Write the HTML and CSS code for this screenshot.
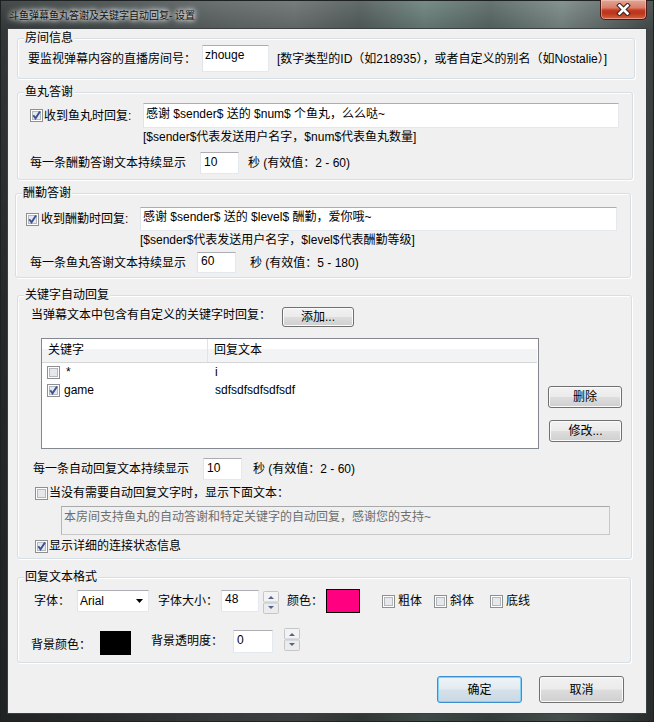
FILE: index.html
```html
<!DOCTYPE html>
<html lang="zh-CN">
<head>
<meta charset="utf-8">
<title>斗鱼弹幕鱼丸答谢及关键字自动回复- 设置</title>
<link rel="stylesheet" href="styles.css">
</head>
<body>
<div class="window">
  <div class="titlebar">
    <div class="title">斗鱼弹幕鱼丸答谢及关键字自动回复- 设置</div>
    <div class="close">
      <svg width="15" height="13" viewBox="0 0 15 13"><path d="M3.5 2.5 L11.5 10.5 M11.5 2.5 L3.5 10.5" stroke="#3a2522" stroke-width="4.6" stroke-linecap="square" fill="none"/><path d="M3.5 2.5 L11.5 10.5 M11.5 2.5 L3.5 10.5" stroke="#ffffff" stroke-width="2.6" stroke-linecap="square" fill="none"/></svg>
    </div>
  </div>

  <div class="client">
    <div class="group g1">
      <div class="gtitle">房间信息</div>
      <div class="row room-row">
        <span class="room-lbl">要监视弹幕内容的直播房间号：</span>
        <div class="edit room-edit">zhouge</div>
        <span class="room-hint">[数字类型的ID（如218935），或者自定义的别名（如Nostalie）]</span>
      </div>
    </div>

    <div class="group g2">
      <div class="gtitle">鱼丸答谢</div>
      <div class="row g2-r1">
        <svg class="cb" width="13" height="13" viewBox="0 0 13 13"><rect x=".5" y=".5" width="12" height="12" fill="#fff" stroke="#8e8f8f"/><rect x="2.5" y="2.5" width="8" height="8" fill="#e6e8eb" stroke="#b3b8be"/><path d="M3.3 6.3 L5.5 9.3 L10 2.4" fill="none" stroke="#3b5196" stroke-width="1.9"/></svg>
        <span class="cb-lbl g2-lbl">收到鱼丸时回复:</span>
        <div class="edit g2-msg">感谢 $sender$ 送的 $num$ 个鱼丸，么么哒~</div>
      </div>
      <div class="hint g2-hint">[$sender$代表发送用户名字，$num$代表鱼丸数量]</div>
      <div class="row g2-r3">
        <span class="g2-dur">每一条酬勤答谢文本持续显示</span>
        <div class="edit num g2-num">10</div>
        <span class="g2-range">秒 (有效值：2 - 60)</span>
      </div>
    </div>

    <div class="group g3">
      <div class="gtitle">酬勤答谢</div>
      <div class="row g3-r1">
        <svg class="cb" width="13" height="13" viewBox="0 0 13 13"><rect x=".5" y=".5" width="12" height="12" fill="#fff" stroke="#8e8f8f"/><rect x="2.5" y="2.5" width="8" height="8" fill="#e6e8eb" stroke="#b3b8be"/><path d="M3.3 6.3 L5.5 9.3 L10 2.4" fill="none" stroke="#3b5196" stroke-width="1.9"/></svg>
        <span class="cb-lbl g3-lbl">收到酬勤时回复:</span>
        <div class="edit g3-msg">感谢 $sender$ 送的 $level$ 酬勤，爱你哦~</div>
      </div>
      <div class="hint g3-hint">[$sender$代表发送用户名字，$level$代表酬勤等级]</div>
      <div class="row g3-r3">
        <span class="g3-dur">每一条鱼丸答谢文本持续显示</span>
        <div class="edit num g3-num">60</div>
        <span class="g3-range">秒 (有效值：5 - 180)</span>
      </div>
    </div>

    <div class="group g4">
      <div class="gtitle">关键字自动回复</div>
      <div class="row g4-r1">
        <span class="g4-lbl">当弹幕文本中包含有自定义的关键字时回复：</span>
        <button class="btn add-btn">添加...</button>
      </div>
      <div class="row list-row">
        <div class="listbox">
          <div class="lhead">
            <div class="lcol1">关键字</div>
            <div class="lcol2">回复文本</div>
          </div>
          <div class="lrow">
            <div class="lcol1">
              <svg class="cb" width="13" height="13" viewBox="0 0 13 13"><rect x=".5" y=".5" width="12" height="12" fill="#fff" stroke="#8e8f8f"/><rect x="2.5" y="2.5" width="8" height="8" fill="#e6e8eb" stroke="#b3b8be"/></svg>
              <span class="kw">*</span>
            </div>
            <div class="lcol2">i</div>
          </div>
          <div class="lrow">
            <div class="lcol1">
              <svg class="cb" width="13" height="13" viewBox="0 0 13 13"><rect x=".5" y=".5" width="12" height="12" fill="#fff" stroke="#8e8f8f"/><rect x="2.5" y="2.5" width="8" height="8" fill="#e6e8eb" stroke="#b3b8be"/><path d="M3.3 6.3 L5.5 9.3 L10 2.4" fill="none" stroke="#3b5196" stroke-width="1.9"/></svg>
              <span class="kw kw2">game</span>
            </div>
            <div class="lcol2">sdfsdfsdfsdfsdf</div>
          </div>
        </div>
        <div class="side-btns">
          <button class="btn del-btn">删除</button>
          <button class="btn mod-btn">修改...</button>
        </div>
      </div>
      <div class="row g4-r3">
        <span class="g4-dur">每一条自动回复文本持续显示</span>
        <div class="edit num g4-num">10</div>
        <span class="g4-range">秒 (有效值：2 - 60)</span>
      </div>
      <div class="row chkline g4-c1">
        <svg class="cb" width="13" height="13" viewBox="0 0 13 13"><rect x=".5" y=".5" width="12" height="12" fill="#fff" stroke="#8e8f8f"/><rect x="2.5" y="2.5" width="8" height="8" fill="#e6e8eb" stroke="#b3b8be"/></svg>
        <span class="chk-text">当没有需要自动回复文字时，显示下面文本：</span>
      </div>
      <div class="edit disabled-edit">本房间支持鱼丸的自动答谢和特定关键字的自动回复，感谢您的支持~</div>
      <div class="row chkline g4-c2">
        <svg class="cb" width="13" height="13" viewBox="0 0 13 13"><rect x=".5" y=".5" width="12" height="12" fill="#fff" stroke="#8e8f8f"/><rect x="2.5" y="2.5" width="8" height="8" fill="#e6e8eb" stroke="#b3b8be"/><path d="M3.3 6.3 L5.5 9.3 L10 2.4" fill="none" stroke="#3b5196" stroke-width="1.9"/></svg>
        <span class="chk-text">显示详细的连接状态信息</span>
      </div>
    </div>

    <div class="group g5">
      <div class="gtitle">回复文本格式</div>
      <div class="row g5-r1">
        <span class="f-lbl">字体：</span>
        <div class="combo">
          <span>Arial</span>
          <svg width="8" height="4" viewBox="0 0 8 4"><path d="M0 0 H7 L3.5 4 Z" fill="#000"/></svg>
        </div>
        <span class="fs-lbl">字体大小：</span>
        <div class="edit num fs-edit">48</div>
        <svg class="spin fs-spin" width="16" height="23" viewBox="0 0 16 23"><rect x=".5" y=".5" width="15" height="10.5" rx="1" fill="#f3f3f3" stroke="#c4c6c9"/><rect x=".5" y="12" width="15" height="10.5" rx="1" fill="#ececec" stroke="#c4c6c9"/><path d="M5 8 L11 8 L8 5 Z" fill="#4f6590"/><path d="M5 15 L11 15 L8 18 Z" fill="#4f6590"/></svg>
        <span class="c-lbl">颜色：</span>
        <div class="swatch pink"></div>
        <svg class="cb cb-b" width="13" height="13" viewBox="0 0 13 13"><rect x=".5" y=".5" width="12" height="12" fill="#fff" stroke="#8e8f8f"/><rect x="2.5" y="2.5" width="8" height="8" fill="#e6e8eb" stroke="#b3b8be"/></svg>
        <span class="st-lbl">粗体</span>
        <svg class="cb cb-i" width="13" height="13" viewBox="0 0 13 13"><rect x=".5" y=".5" width="12" height="12" fill="#fff" stroke="#8e8f8f"/><rect x="2.5" y="2.5" width="8" height="8" fill="#e6e8eb" stroke="#b3b8be"/></svg>
        <span class="st-lbl">斜体</span>
        <svg class="cb cb-u" width="13" height="13" viewBox="0 0 13 13"><rect x=".5" y=".5" width="12" height="12" fill="#fff" stroke="#8e8f8f"/><rect x="2.5" y="2.5" width="8" height="8" fill="#e6e8eb" stroke="#b3b8be"/></svg>
        <span class="st-lbl">底线</span>
      </div>
      <div class="row g5-r2">
        <span class="bg-lbl">背景颜色：</span>
        <div class="swatch black"></div>
        <span class="op-lbl">背景透明度：</span>
        <div class="edit num op-edit">0</div>
        <svg class="spin op-spin" width="16" height="23" viewBox="0 0 16 23"><rect x=".5" y=".5" width="15" height="10.5" rx="1" fill="#f3f3f3" stroke="#c4c6c9"/><rect x=".5" y="12" width="15" height="10.5" rx="1" fill="#ececec" stroke="#c4c6c9"/><path d="M5 8 L11 8 L8 5 Z" fill="#4f6590"/><path d="M5 15 L11 15 L8 18 Z" fill="#4f6590"/></svg>
      </div>
    </div>

    <div class="actions">
      <button class="btn big default">确定</button>
      <button class="btn big">取消</button>
    </div>
  </div>
</div>
</body>
</html>
```

FILE: styles.css
```css
* { box-sizing: border-box; }
html, body { margin: 0; padding: 0; }
body {
  font: 12px/14px "Liberation Sans", "Noto Sans CJK SC", sans-serif;
  color: #000;
  background: #2b2f30;
}
.window {
  width: 654px;
  height: 722px;
  display: flex;
  flex-direction: column;
  background:
    linear-gradient(180deg, rgba(255,255,255,0.06) 0, rgba(0,0,0,0.15) 30px, rgba(0,0,0,0.35) 300px, rgba(0,0,0,0.45) 100%),
    linear-gradient(90deg, #3a3f40 0%, #4c5353 18%, #646b6b 35%, #6e7474 45%, #57625f 55%, #6f8580 65%, #5c6c69 75%, #7e8d8a 86%, #66706f 93%, #484e4f 100%);
  border: 1px solid #1d2122;
}
.titlebar {
  height: 27px;
  display: flex;
  align-items: flex-start;
  flex: none;
}
.title {
  margin: 8px 0 0 8px;
  font-size: 10px;
  line-height: 14px;
  color: #111;
  text-shadow: 0 0 4px #fff, 0 0 6px rgba(255,255,255,0.9), 0 0 8px rgba(255,255,255,0.6);
}
.close {
  margin: -1px 6px 0 auto;
  width: 47px;
  height: 20px;
  border: 1px solid #4b1c14;
  border-top: none;
  border-radius: 0 0 5px 5px;
  background: linear-gradient(180deg, #e2a595 0%, #d7806b 40%, #c4391f 55%, #b9361c 70%, #d46243 100%);
  box-shadow: inset 0 0 0 1px rgba(255,220,210,0.45);
  display: flex;
  align-items: center;
  justify-content: center;
}
.client {
  margin-left: 6px;
  width: 640px;
  height: 686px;
  background: #f0f0f0;
  border: 1px solid #3a4042;
  padding-top: 9px;
  flex: none;
}

/* group boxes */
.group {
  border: 1px solid #d5dfe5;
  border-radius: 3px;
  box-shadow: inset 1px 1px 0 #fff, 1px 1px 0 #fff;
}
.gtitle {
  display: table;
  margin: -8px 0 0 6px;
  padding: 0 1px;
  background: #f0f0f0;
  line-height: 14px;
  height: 14px;
}
.row { display: flex; align-items: center; }
.hint { line-height: 14px; }

/* edits */
.edit {
  background: #fff;
  border: 1px solid;
  border-color: #abadb3 #e3e9ef #e3e9ef #e2e3ea;
  padding: 2px 2px 0;
  line-height: 14px;
  white-space: nowrap;
  overflow: hidden;
  flex: none;
}
.num { padding-left: 3px; }

/* checkboxes */
.cb { display: block; flex: none; }

/* buttons */
.btn {
  font: inherit;
  color: #000;
  padding: 0;
  border: 1px solid #707070;
  border-radius: 3px;
  background: linear-gradient(180deg, #f2f2f2 0%, #ebebeb 48%, #dddddd 52%, #cfcfcf 100%);
  box-shadow: inset 0 0 0 1px #fbfbfb;
  line-height: 14px;
  flex: none;
}
.btn.default {
  border-color: #3c8fd0;
  background: linear-gradient(180deg, #eef4f8 0%, #e3ebf1 48%, #d5e1ea 52%, #c9d8e4 100%);
  box-shadow: inset 0 0 0 1px #7fd3f7;
}

/* group 1 */
.g1 { margin-left: 9px; width: 618px; height: 41px; }
.room-row { margin-left: 10px; }
.room-lbl { width: 174px; flex: none; }
.room-edit { width: 67px; height: 27px; }
.room-hint { margin-left: 8px; white-space: nowrap; }

/* group 2 */
.g2 { margin: 13px 0 0 9px; width: 616px; height: 88px; }
.g2-r1 { margin: 4px 0 0 12px; height: 25px; }
.cb-lbl { flex: none; }
.g2-lbl { margin-left: 1px; width: 99px; }
.g2-msg { width: 476px; height: 25px; padding-top: 3px; }
.g2-hint { margin: 2px 0 0 125px; }
.g2-r3 { margin: 8px 0 0 12px; }
.g2-dur { width: 170px; flex: none; }
.g2-num { width: 39px; height: 22px; padding-top: 2px; }
.g2-range { margin-left: 9px; }

/* group 3 */
.g3 { margin: 13px 0 0 7px; width: 616px; height: 85px; }
.g3-r1 { margin: 7px 0 0 10px; height: 24px; }
.g3-lbl { margin-left: 2px; width: 99px; }
.g3-msg { width: 477px; height: 24px; padding-top: 2px; }
.g3-hint { margin: 2px 0 0 124px; }
.g3-r3 { margin: 5px 0 0 14px; }
.g3-dur { width: 167px; flex: none; }
.g3-num { width: 39px; height: 21px; padding-top: 1px; }
.g3-range { margin-left: 14px; }

/* group 4 */
.g4 { margin: 17px 0 0 9px; width: 615px; height: 264px; }
.g4-r1 { margin: 5px 0 0 13px; height: 20px; }
.g4-lbl { width: 251px; flex: none; padding-bottom: 5px; }
.add-btn { width: 72px; height: 20px; }
.list-row { margin: 11px 0 0 23px; align-items: flex-start; }
.listbox {
  width: 498px;
  height: 111px;
  border: 1px solid #828790;
  background: #fff;
  flex: none;
}
.lhead {
  display: flex;
  height: 24px;
  margin-right: 1px;
  border-bottom: 1px solid #d5d5d5;
  background: linear-gradient(180deg, #ffffff 0%, #ffffff 42%, #f2f3f5 46%, #f2f3f5 100%);
}
.lhead .lcol1 { width: 166px; border-right: 1px solid #e2e3e5; padding: 4px 0 0 6px; }
.lhead .lcol2 { padding: 4px 0 0 6px; }
.lrow { display: flex; height: 18px; align-items: center; }
.lrow .lcol1 { width: 166px; display: flex; align-items: center; padding-left: 5px; }
.lrow .lcol2 { padding-left: 7px; }
.kw { margin-left: 6px; }
.kw2 { margin-left: 4px; }
.side-btns { display: flex; flex-direction: column; margin-left: 9px; }
.del-btn { width: 74px; height: 22px; margin-top: 48px; }
.mod-btn { width: 73px; height: 22px; margin: 12px 0 0 1px; }
.g4-r3 { margin: 9px 0 0 15px; }
.g4-dur { width: 170px; flex: none; }
.g4-num { width: 39px; height: 22px; padding-top: 2px; }
.g4-range { margin-left: 11px; }
.chkline { margin-left: 17px; height: 14px; }
.chk-text { margin-left: 1px; }
.g4-c1 { margin-top: 6px; }
.disabled-edit {
  margin: 6px 0 0 43px;
  width: 549px;
  height: 29px;
  background: #f0f0f0;
  border: 1px solid #abadb3;
  border-color: #a9a9a9 #c8c8c8 #c8c8c8 #b5b5b5;
  color: #6d6d6d;
  padding: 3px 2px 0;
}
.g4-c2 { margin-top: 4px; }

/* group 5 */
.g5 { margin: 18px 0 0 9px; width: 614px; height: 86px; }
.g5-r1 { margin: 4px 0 0 16px; height: 26px; }
.f-lbl { width: 43px; flex: none; }
.combo {
  width: 72px;
  height: 22px;
  background: #fff;
  border: 1px solid;
  border-color: #abadb3 #e3e9ef #e3e9ef #e2e3ea;
  display: flex;
  align-items: center;
  justify-content: space-between;
  padding: 0 4px 0 2px;
  flex: none;
}
.combo svg { display: block; }
.fs-lbl { margin-left: 9px; width: 63px; flex: none; }
.fs-edit { width: 38px; height: 22px; padding-top: 1px; }
.spin { display: block; flex: none; }
.fs-spin { margin-left: 4px; margin-top: 3px; }
.c-lbl { margin-left: 8px; width: 39px; flex: none; }
.swatch { border: 1px solid #000; flex: none; }
.pink { width: 34px; height: 24px; background: #ff0080; }
.black { width: 31px; height: 24px; background: #000; margin-top: 3px; }
.cb-b { margin-left: 22px; }
.cb-i { margin-left: 12px; }
.cb-u { margin-left: 16px; }
.st-lbl { margin-left: 3px; flex: none; }
.g5-r2 { margin: 14px 0 0 13px; align-items: flex-start; }
.bg-lbl { width: 69px; flex: none; margin-top: 10px; }
.op-lbl { margin: 6px 0 0 20px; width: 82px; flex: none; }
.op-edit { width: 40px; height: 23px; margin-top: 2px; padding-top: 2px; }
.op-spin { margin-left: 11px; }

/* bottom buttons */
.actions {
  display: flex;
  gap: 17px;
  margin-top: 13px;
  padding-left: 429px;
}
.big { width: 85px; height: 27px; }
```
